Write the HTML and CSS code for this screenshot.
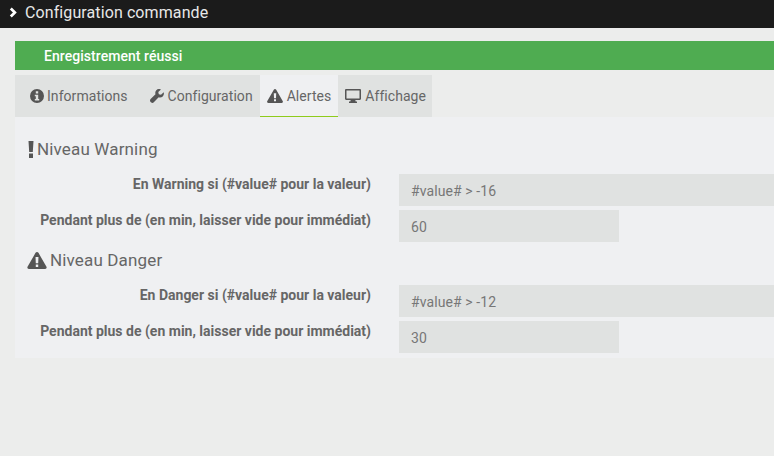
FILE: index.html
```html
<!DOCTYPE html>
<html lang="fr">
<head>
  <meta charset="UTF-8">
  <title>Configuration commande</title>
  <link rel="stylesheet" href="styles.css">
</head>
<body>
  <div class="topbar">
    <svg class="chevron" viewBox="0 0 10 12"><path d="M2 1.500 6.500 6 2 10.500" fill="none" stroke="#fff" stroke-width="3"/></svg>
    <span>Configuration commande</span>
  </div>

  <div class="main">
    <div class="alert">Enregistrement réussi</div>

    <div class="tabs">
      <div class="tab first">
        <svg class="icon" viewBox="0 0 14 14"><path fill-rule="evenodd" d="M7 0a7 7 0 1 1 0 14A7 7 0 0 1 7 0zM5.800 2.300v2.200h2.400V2.300zM4.800 5.800v1.500h1v2.600h-1v1.600h4.400V9.900h-1V5.800z"/></svg>
        Informations
      </div>
      <div class="tab">
        <svg class="icon" viewBox="0 0 14 14"><path d="M13.700 3.200 11 5.700 8.800 5.200 8.300 3 11 .4C9.300-.4 7.400 0 6.300 1.200 5.300 2.300 5 3.800 5.500 5.200L.6 10.100c-.8.800-.8 2 0 2.800l.4.400c.8.800 2 .8 2.800 0l4.900-5c1.400.5 3 .2 4-.9 1.100-1 1.500-2.700 1-4.200z"/></svg>
        Configuration
      </div>
      <div class="tab active">
        <svg class="icon wide" viewBox="0 0 16 14"><path fill-rule="evenodd" d="M8 0c.5 0 .9.300 1.200.7l6.600 11.500c.4.800-.1 1.800-1.100 1.800H1.300C.3 14-.2 13 .2 12.200L6.800.7C7.100.3 7.500 0 8 0zM6.800 4.200l.2 5h2l.2-5zM7 10.200v2.100h2v-2.100z"/></svg>
        Alertes
      </div>
      <div class="tab">
        <svg class="icon wide" viewBox="0 0 16 14"><path fill-rule="evenodd" d="M1.200 0h13.600c.7 0 1.200.5 1.200 1.200v8.600c0 .7-.5 1.200-1.200 1.200h-4.500l.4 1.500h1.300v1.500H4v-1.500h1.300l.4-1.500H1.200C.5 11 0 10.500 0 9.800V1.200C0 .5.500 0 1.200 0zm.3 1.500v8h13v-8z"/></svg>
        Affichage
      </div>
    </div>

    <div class="panel">
      <h3 class="legend">
        <svg class="legend-bang" viewBox="0 0 5 17"><path d="M0 0h5l-.7 11H.7zM.5 12.500h4V17h-4z"/></svg>
        Niveau Warning
      </h3>
      <div class="row">
        <label>En Warning si (#value# pour la valeur)</label>
        <div class="field long">#value# &gt; -16</div>
      </div>
      <div class="row">
        <label>Pendant plus de (en min, laisser vide pour immédiat)</label>
        <div class="field">60</div>
      </div>

      <h3 class="legend second">
        <svg class="legend-icon" viewBox="0 0 16 14"><path fill-rule="evenodd" d="M8 0c.5 0 .9.300 1.200.7l6.600 11.500c.4.800-.1 1.800-1.100 1.800H1.300C.3 14-.2 13 .2 12.200L6.800.7C7.100.3 7.500 0 8 0zM6.800 4.200l.2 5h2l.2-5zM7 10.200v2.100h2v-2.100z"/></svg>
        Niveau Danger
      </h3>
      <div class="row">
        <label>En Danger si (#value# pour la valeur)</label>
        <div class="field long">#value# &gt; -12</div>
      </div>
      <div class="row">
        <label>Pendant plus de (en min, laisser vide pour immédiat)</label>
        <div class="field">30</div>
      </div>
    </div>
  </div>
</body>
</html>
```

FILE: styles.css
```css
html, body {
  height: 100%;
}

body {
  margin: 0;
  overflow: hidden;
  background: #ecedec;
  font-family: 'Roboto', sans-serif;
  font-size: 14px;
  color: #555;
}

.topbar {
  height: 28px;
  box-sizing: border-box;
  padding: 0 0 3px 9px;
  display: flex;
  align-items: center;
  gap: 7px;
  background: #1b1b1b;
  color: #e8e8e8;
  font-size: 16px;
  letter-spacing: 0.1px;
}

.chevron {
  width: 9px;
  height: 11px;
}

.main {
  padding: 13px 0 0 15px;
}

.alert {
  height: 29px;
  line-height: 30px;
  padding-left: 29px;
  background: #4fac51;
  color: #fff;
  font-weight: 500;
  letter-spacing: 0.05px;
}

.tabs {
  display: flex;
  margin-top: 5px;
  width: 417px;
  height: 42px;
  background: #e0e2e1;
}

.tab {
  display: flex;
  align-items: center;
  gap: 4px;
  padding: 0 7px;
  color: #666;
  white-space: nowrap;
  letter-spacing: 0.05px;
}

.tab.first {
  gap: 3px;
  padding-left: 15px;
  padding-right: 15px;
}

.tab.active {
  background: #eff0f2;
  border-bottom: 1px solid #8fcb1c;
  height: 41px;
}

.icon {
  width: 14px;
  height: 14px;
  fill: #555;
}

.icon.wide {
  width: 16px;
}

.panel {
  height: 241px;
  box-sizing: border-box;
  padding-top: 20px;
  background: #eff0f2;
}

.legend {
  display: flex;
  align-items: center;
  gap: 3px;
  height: 24px;
  margin: 0 0 13px;
  padding-left: 13px;
  font-size: 17px;
  font-weight: 400;
  color: #666;
  letter-spacing: 0.15px;
}

.legend.second {
  margin-top: 6px;
  padding-left: 12px;
}

.legend-bang {
  width: 6px;
  height: 17px;
  fill: #555;
}

.legend-icon {
  width: 20px;
  height: 17px;
  fill: #555;
}

.row {
  display: flex;
  margin-bottom: 4px;
}

.row label {
  flex: none;
  width: 356px;
  padding-top: 2px;
  text-align: right;
  font-weight: 700;
  color: #666;
  white-space: nowrap;
}

.field {
  flex: none;
  width: 208px;
  height: 32px;
  line-height: 34px;
  margin-left: 28px;
  padding-left: 12px;
  background: #e0e2e1;
  color: #777;
  letter-spacing: 0.1px;
}

.field.long {
  flex: 1;
}
```
